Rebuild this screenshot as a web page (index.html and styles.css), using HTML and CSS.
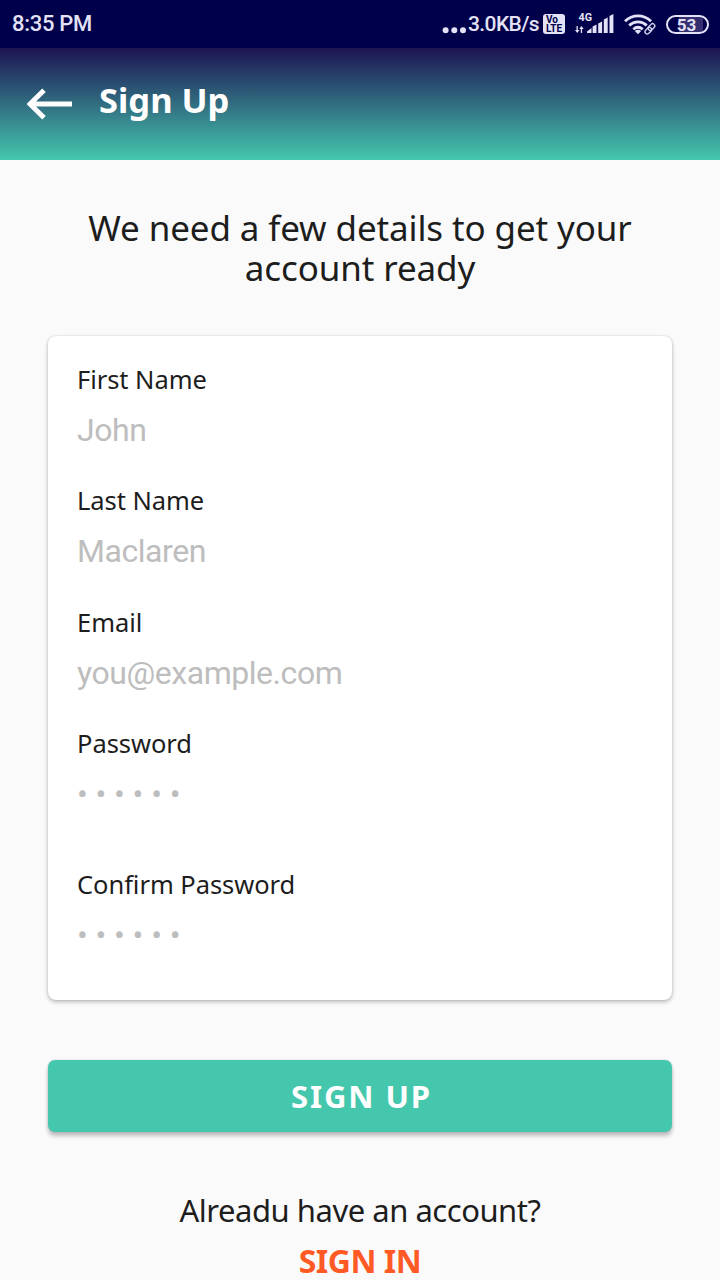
FILE: index.html
```
<!DOCTYPE html>
<html lang="en">
<head>
<meta charset="utf-8">
<title>Sign Up</title>
<link rel="stylesheet" href="styles.css">
</head>
<body>
<div class="status">
  <span class="clock">8:35 PM</span>
  <div class="status-right">
    <svg class="dots" width="24" height="48" viewBox="0 0 24 48"><g fill="#e4e2f6"><circle cx="3.6" cy="30.3" r="3"/><circle cx="12.3" cy="30.3" r="3"/><circle cx="21" cy="30.3" r="3"/></g></svg>
    <span class="speed">3.0KB/s</span>
    <span class="volte"><span>Vo</span><span>LTE</span></span>
    <svg class="signal" width="40" height="48" viewBox="575 0 40 48">
      <text class="net" x="578.5" y="21" textLength="13.5" lengthAdjust="spacingAndGlyphs">4G</text>
      <g fill="#e4e2f6">
        <path d="M576.500 26h1.300v4h1.700l-2.300 3-2.200-3h1.500zM580.800 33h1.300v-4h1.600l-2.200-3-2.300 3h1.600z"/>
        <path d="M587 33v-1.500l4.500-3.500v5zM592.600 33v-6.500l3.900-2V33zM598.200 33v-9.500l3.900-2V33zM603.800 33V19.500l3.900-2V33zM609.500 33V16l3.900-2v19z"/>
      </g>
    </svg>
    <svg class="wifi" width="34" height="48" viewBox="623 0 34 48">
      <g fill="none" stroke="#e4e2f6" stroke-width="2.8">
        <path d="M625 21.300c7.500-7.200 18.500-7.200 26 0"/>
        <path d="M629.200 25.400c5.200-4.800 12.400-4.800 17.600 0"/>
        <path d="M633.300 29.300c2.900-2.500 6.500-2.500 9.400 0"/>
      </g>
      <path d="M634.800 31q3.200-2.400 6.400 0L638 34.300z" fill="#e4e2f6"/>
      <g fill="none" stroke="#00004a" stroke-width="4"><path d="M645 33l9-8"/></g>
      <g fill="none" stroke="#d2d0ea" stroke-width="1.400">
        <rect x="-4" y="-2.200" width="7.500" height="4.400" rx="2.200" transform="translate(648.500 30.500) rotate(-45)"/>
        <rect x="-3.500" y="-2.200" width="7.500" height="4.400" rx="2.200" transform="translate(651.300 27.200) rotate(-45)"/>
      </g>
    </svg>
    <span class="battery"><span>53</span></span>
  </div>
</div>
<header class="appbar">
  <svg class="back" width="46" height="32" viewBox="0 0 46 32"><path d="M45 16H3M17 2.300L3 16l14 13.700" fill="none" stroke="#fff" stroke-width="5"/></svg>
  <h1 class="title">Sign Up</h1>
</header>
<main class="page">
  <h2 class="intro">We need a few details to get your<br>account ready</h2>
  <form class="card">
    <div class="field"><label>First Name</label><div class="value">John</div></div>
    <div class="field"><label>Last Name</label><div class="value">Maclaren</div></div>
    <div class="field"><label>Email</label><div class="value">you@example.com</div></div>
    <div class="field secret"><label>Password</label><div class="value mask">• • • • • •</div></div>
    <div class="field"><label>Confirm Password</label><div class="value mask">• • • • • •</div></div>
  </form>
  <button class="submit">SIGN UP</button>
  <p class="have">Alreadu have an account?</p>
  <a class="signin">SIGN IN</a>
</main>
</body>
</html>
```
FILE: styles.css
```
* { box-sizing: border-box; }
body {
  margin: 0;
  width: 720px;
  height: 1280px;
  overflow: hidden;
  background: #fafafa;
  color: #1d1d1d;
  font-family: "Noto Sans", sans-serif;
}
.status {
  display: flex;
  justify-content: space-between;
  align-items: center;
  height: 48px;
  padding: 0 11px 0 12px;
  background: #00004a;
  color: #e4e2f6;
  font-family: Roboto, sans-serif;
  font-weight: 500;
}
.status svg { display: block; flex: none; }
.clock { font-size: 22px; line-height: 50px; letter-spacing: -.3px; }
.status-right { display: flex; align-items: center; height: 48px; }
.dots { margin-right: 2px; }
.speed { width: 75px; font-size: 21px; line-height: 50px; letter-spacing: -.6px; white-space: nowrap; }
.volte {
  display: flex;
  flex-direction: column;
  width: 22px;
  height: 20px;
  padding: 1px 2px 0 3px;
  border-radius: 3px;
  background: #e4e2f6;
  color: #00004a;
  font: 700 10px/9px Roboto, sans-serif;
}
.signal { margin-left: 10px; }
.net { fill: #e4e2f6; font: 700 11px Roboto, sans-serif; }
.wifi { margin-left: 8px; }
.battery {
  width: 43px;
  height: 19px;
  margin-left: 9px;
  padding-right: 2px;
  border: 2px solid #e4e2f6;
  border-radius: 10px;
  background: linear-gradient(90deg, #00004a 28%, #343070 28%, #343070 90%, #00004a 90%);
  text-align: center;
  font: 700 17px/16px Roboto, sans-serif;
}
.appbar {
  display: flex;
  align-items: flex-start;
  height: 112px;
  padding: 40px 0 0 27px;
  background: linear-gradient(#1d1453, #45c7ae);
}
.title {
  margin: -12px 0 0 26px;
  color: #fff;
  font-size: 34.500px;
  line-height: 48px;
  font-weight: 700;
}
.page { display: flex; flex-direction: column; padding: 48px 48px 0; }
.intro {
  margin: 0;
  text-align: center;
  font-size: 35px;
  line-height: 40px;
  letter-spacing: -.12px;
  font-weight: 400;
  white-space: nowrap;
}
.card {
  height: 664px;
  margin-top: 48px;
  padding: 27.900px 29px 0;
  border-radius: 8px;
  background: #fff;
  box-shadow: 0 2px 4px rgba(0, 0, 0, .25), 0 0 2px rgba(0, 0, 0, .14);
}
.field { height: 121.400px; }
.field.secret { height: 140.500px; }
.field label { display: block; font-size: 25.500px; line-height: 30px; letter-spacing: -.05px; white-space: nowrap; }
.value {
  margin-top: 17px;
  color: #bdbdbd;
  font: 400 32px/38px Roboto, sans-serif;
  letter-spacing: -.45px;
}
.value.mask { letter-spacing: -.1px; }
.submit {
  height: 72px;
  margin-top: 60px;
  padding: 0 0 0 3px;
  border: 0;
  border-radius: 7px;
  background: #45c7ae;
  color: #fff;
  box-shadow: 0 4px 4px rgba(0, 0, 0, .24), 0 0 3px rgba(0, 0, 0, .12);
  font: 700 31px/72px "Noto Sans", sans-serif;
  letter-spacing: 1.900px;
}
.have {
  margin: 56px 0 0;
  text-align: center;
  font-size: 31px;
  line-height: 44px;
  letter-spacing: -.48px;
}
.signin {
  margin-top: 7px;
  text-align: center;
  color: #ff5a25;
  font-size: 32px;
  line-height: 44px;
  letter-spacing: -.5px;
  font-weight: 700;
}
```
